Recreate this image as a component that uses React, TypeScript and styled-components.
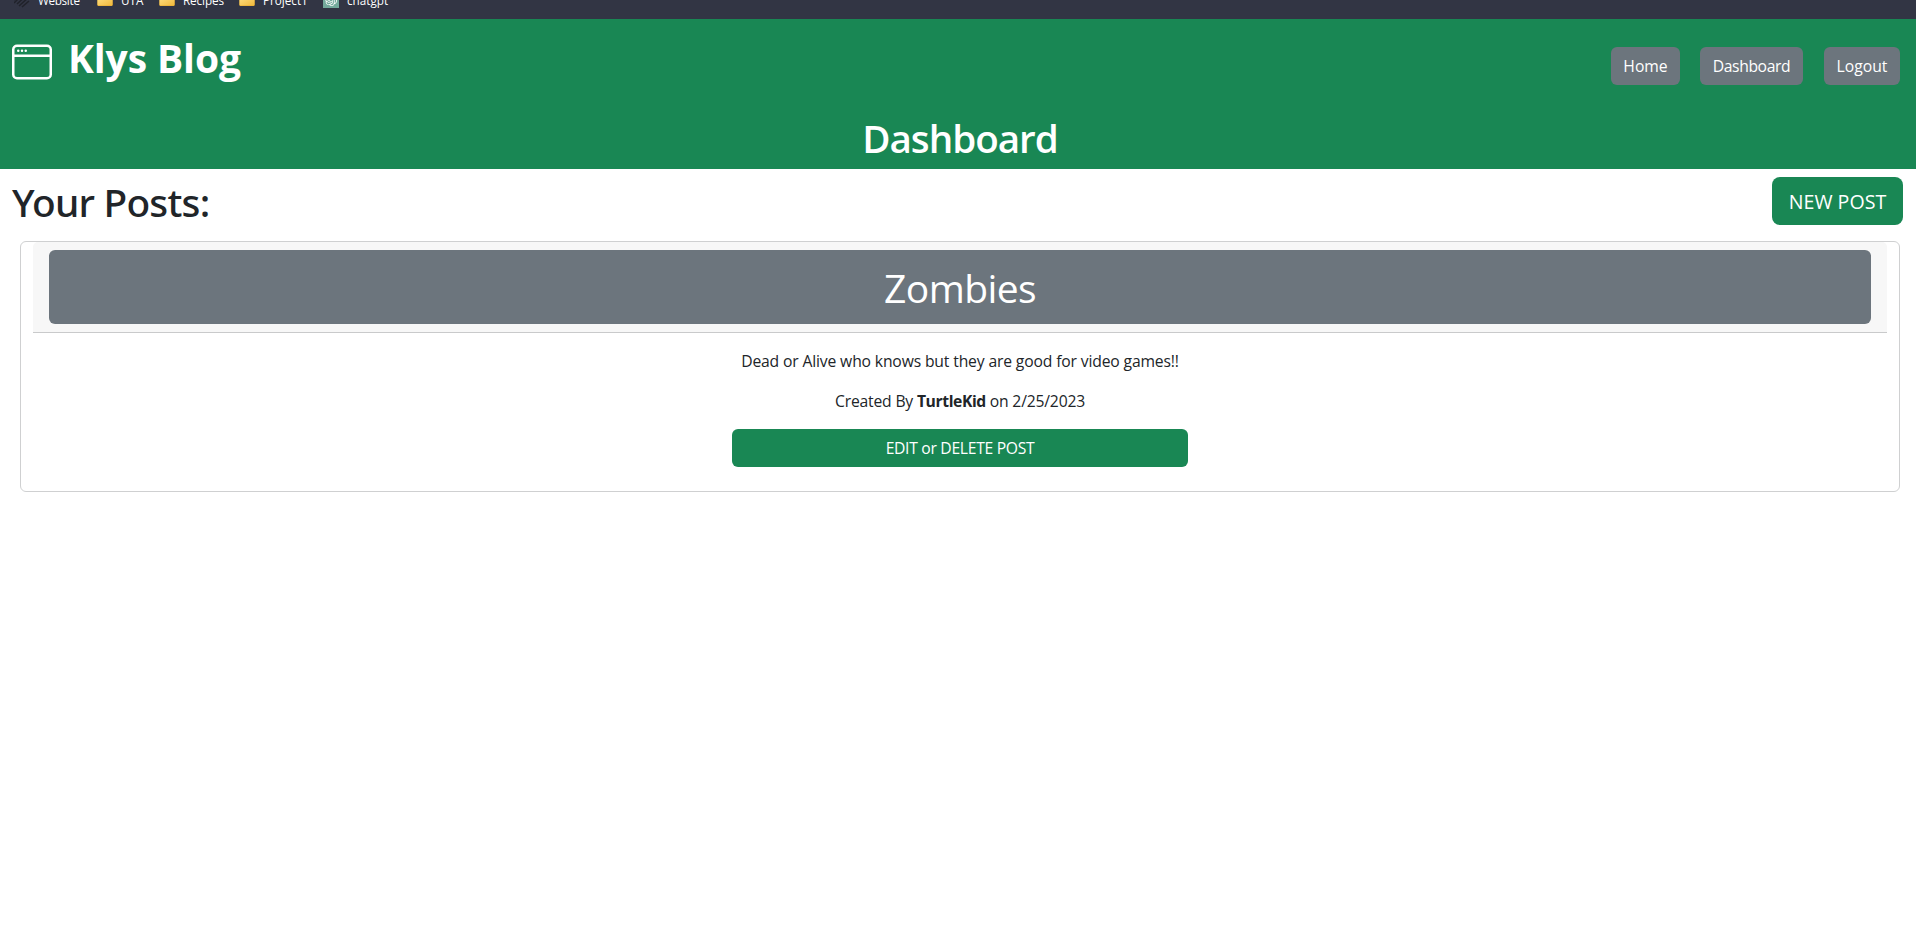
import React from 'react';
import styled, { createGlobalStyle } from 'styled-components';
import { BsWindow } from 'react-icons/bs';
import { SiOpenai } from 'react-icons/si';

const GlobalStyle = createGlobalStyle`
  *, *::before, *::after { box-sizing: border-box; }
  body {
    margin: 0;
    background: #fff;
    color: #212529;
    font-family: "Segoe UI", "Open Sans", "Noto Sans", sans-serif;
    font-size: 15.7px;
    line-height: 24px;
  }
  h1, h2, p { margin: 0; }
`;

const Track = styled.span<{ $by?: number }>`
  letter-spacing: ${({ $by = 0 }) => $by}px;
  white-space: nowrap;
`;

const BookmarkBar = styled.div`
  display: flex;
  align-items: flex-start;
  height: 19px;
  padding-left: 14px;
  overflow: hidden;
  background: #323544;
`;

const Bookmark = styled.div<{ $width: number }>`
  display: flex;
  align-items: center;
  flex: none;
  gap: 8px;
  width: ${({ $width }) => $width}px;
  height: 16px;
  margin-top: -8px;
  color: #fff;
  font-size: 11.7px;
  line-height: 14px;
`;

const BookmarkLabel = styled(Track)`
  padding-bottom: 1px;
`;

const BookmarkIcon = styled.svg`
  flex: none;
  width: 16px;
  height: 16px;
`;

const GptBadge = styled.span`
  display: flex;
  align-items: center;
  justify-content: center;
  flex: none;
  width: 16px;
  height: 16px;
  background: #74aa9c;
  color: #fff;
  font-size: 12px;
`;

const Header = styled.header`
  display: flex;
  flex-direction: column;
  justify-content: space-between;
  height: 150px;
  padding-bottom: 7px;
  background: #198754;
  color: #fff;
`;

const NavRow = styled.div`
  display: flex;
  justify-content: space-between;
  padding: 15px 16px 0 12px;
`;

const Brand = styled.div`
  display: flex;
  align-items: flex-start;
  gap: 16px;
`;

const BrandIcon = styled(BsWindow)`
  width: 40px;
  height: 40px;
  margin-top: 8px;
`;

const BrandName = styled.h1`
  font-size: 39px;
  font-weight: 700;
  line-height: 47px;
`;

const Nav = styled.nav`
  display: flex;
  padding-top: 13px;
`;

const Button = styled.button<{ $width: number; $tone?: 'green' | 'gray'; $large?: boolean }>`
  width: ${({ $width }) => $width}px;
  height: ${({ $large }) => ($large ? 48 : 38)}px;
  padding: 1px 0 0;
  border: 0;
  border-radius: ${({ $large }) => ($large ? 8 : 6)}px;
  background: ${({ $tone }) => ($tone === 'green' ? '#198754' : '#6c757d')};
  color: #fff;
  font-family: inherit;
  font-size: ${({ $large }) => ($large ? 19.6 : 15.7)}px;
  line-height: 1.5;
  cursor: pointer;
`;

const NavButton = styled(Button)`
  & + & { margin-left: 20px; }
  &:last-child { margin-left: 21px; }
`;

const PageTitle = styled.h2`
  padding-left: 4px;
  font-size: 38.6px;
  font-weight: 600;
  line-height: 48px;
  text-align: center;
`;

const PostsBar = styled.div`
  display: flex;
  justify-content: space-between;
  height: 56px;
  padding: 8px 13px 0 12px;
`;

const SectionTitle = styled.h2`
  padding-top: 1px;
  font-family: "Segoe UI", "Noto Sans", sans-serif;
  font-size: 38.8px;
  font-weight: 500;
  line-height: 48px;
`;

const Card = styled.article`
  display: flex;
  flex-direction: column;
  align-items: center;
  height: 251px;
  margin: 16px 16px 0 20px;
  padding: 0 12px;
  border: 1px solid #cfd0d1;
  border-radius: 6px;
`;

const CardHeader = styled.div`
  align-self: stretch;
  height: 91px;
  padding: 8px 16px;
  border-bottom: 1px solid #c9cacb;
  border-radius: 5px 5px 0 0;
  background: #f7f7f7;
`;

const PostTitle = styled.h2`
  height: 74px;
  border-radius: 6px;
  background: #6c757d;
  color: #fff;
  font-size: 39px;
  font-weight: 400;
  line-height: 76px;
  text-align: center;
`;

const PostText = styled.p`
  margin-top: 16px;
  font-weight: 400;
  & strong { font-weight: 700; letter-spacing: -0.4px; }
`;

const EditButton = styled(Button)`
  margin-top: 16px;
`;

const Folder = () => (
  <BookmarkIcon viewBox="0 0 16 16">
    <defs>
      <linearGradient id="folder" x1="0" y1="0" x2="1" y2="1">
        <stop offset="0" stopColor="#ffe083" />
        <stop offset="1" stopColor="#f0b93c" />
      </linearGradient>
    </defs>
    <path d="M0.5 2.5h5l2 2h7.5a.6.6 0 0 1 .6.6v8a1 1 0 0 1-1 1H1.4a1 1 0 0 1-1-1z" fill="#e5a92d" />
    <path d="M.5 6 15.5 5v7.6a1 1 0 0 1-1 1H1.5a1 1 0 0 1-1-1z" fill="url(#folder)" />
  </BookmarkIcon>
);

const SiteMark = () => (
  <BookmarkIcon viewBox="0 0 16 16" stroke="#20222a" strokeWidth="1.5">
    <path d="M0 8 8 0M0 11 11 0M3 12 14 2M5 14 15 5M8 15 15 9" />
  </BookmarkIcon>
);

export default function App() {
  return (
    <>
      <GlobalStyle />
      <BookmarkBar>
        <Bookmark $width={83}><SiteMark /><BookmarkLabel $by={-0.3}>Website</BookmarkLabel></Bookmark>
        <Bookmark $width={62}><Folder /><BookmarkLabel>UTA</BookmarkLabel></Bookmark>
        <Bookmark $width={80}><Folder /><BookmarkLabel $by={-0.1}>Recipes</BookmarkLabel></Bookmark>
        <Bookmark $width={84}><Folder /><BookmarkLabel>Project1</BookmarkLabel></Bookmark>
        <Bookmark $width={80}><GptBadge><SiOpenai /></GptBadge><BookmarkLabel>chatgpt</BookmarkLabel></Bookmark>
      </BookmarkBar>
      <Header>
        <NavRow>
          <Brand>
            <BrandIcon />
            <BrandName><Track $by={-0.1}>Klys Blog</Track></BrandName>
          </Brand>
          <Nav>
            <NavButton $width={69}><Track>Home</Track></NavButton>
            <NavButton $width={103}><Track $by={-0.4}>Dashboard</Track></NavButton>
            <NavButton $width={76}><Track>Logout</Track></NavButton>
          </Nav>
        </NavRow>
        <PageTitle><Track $by={-1}>Dashboard</Track></PageTitle>
      </Header>
      <main>
        <PostsBar>
          <SectionTitle><Track $by={-0.75}>Your Posts:</Track></SectionTitle>
          <Button $width={131} $tone="green" $large><Track>NEW POST</Track></Button>
        </PostsBar>
        <Card>
          <CardHeader>
            <PostTitle><Track $by={-0.6}>Zombies</Track></PostTitle>
          </CardHeader>
          <PostText><Track $by={-0.15}>Dead or Alive who knows but they are good for video games!!</Track></PostText>
          <PostText><Track $by={-0.18}>Created By <strong>TurtleKid</strong> on 2/25/2023</Track></PostText>
          <EditButton $width={456} $tone="green"><Track $by={-0.3}>EDIT or DELETE POST</Track></EditButton>
        </Card>
      </main>
    </>
  );
}
